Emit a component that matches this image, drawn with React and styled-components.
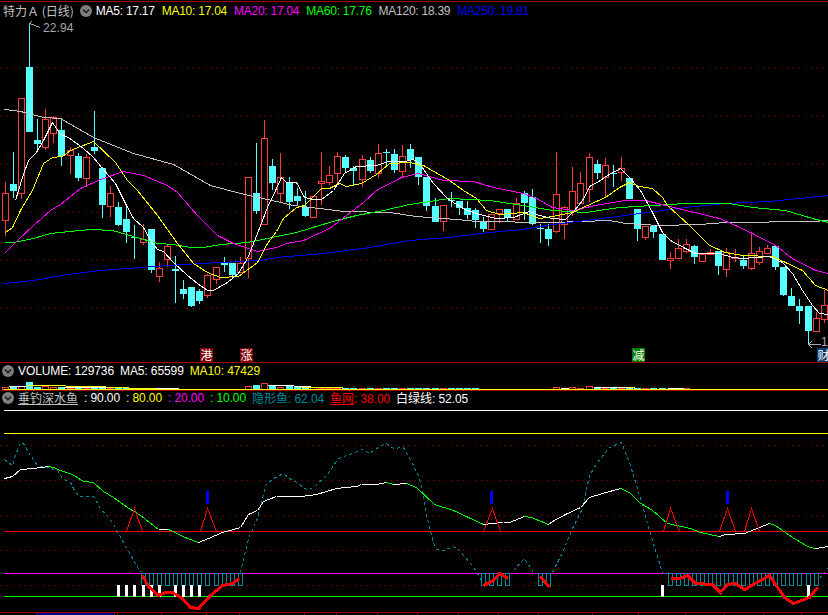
import React from 'react';
import styled, { createGlobalStyle } from 'styled-components';

const GlobalStyle = createGlobalStyle`
  html, body { margin: 0; padding: 0; background: #000; }
`;

const CX = (i) => Math.round(4.67 + 8.11 * i);

/* type, high, body top, body bottom, low — 1 = red hollow, 0 = cyan filled */
const CANDLES = [
  [1,182,193,220,236],[0,152,184,191,198],[1,98,98,193,199],[0,23,67,132,132],[0,119,140,144,150],
  [1,109,119,147,150],[1,116,117,133,143],[0,120,130,156,166],[1,147,150,155,174],[0,153,156,178,181],
  [1,154,157,178,187],[0,111,147,151,154],[0,167,168,205,218],[1,186,193,206,217],[0,202,207,225,226],
  [0,204,219,232,243],[0,225,237,238,259],[1,224,239,242,245],[0,229,229,270,273],[1,262,268,276,282],
  [1,245,246,259,267],[0,256,269,271,303],[0,280,289,294,299],[0,287,287,306,307],[0,289,291,301,304],
  [1,274,275,295,298],[1,267,267,279,284],[0,257,263,265,272],[0,263,263,275,278],[1,257,263,272,273],
  [1,177,177,258,278],[0,143,193,211,214],[1,120,138,224,224],[0,159,166,183,190],[1,153,177,193,202],
  [0,177,183,202,209],[0,188,196,201,205],[0,191,207,216,217],[1,196,196,217,217],[1,152,181,183,205],
  [1,166,175,182,185],[1,152,156,173,183],[0,155,157,168,172],[0,166,168,171,185],[1,155,159,179,187],
  [0,157,160,171,173],[1,144,153,173,178],[0,149,152,153,165],[0,149,154,170,173],[1,145,156,171,177],
  [0,144,149,160,168],[0,157,157,177,185],[0,177,177,206,211],[0,198,206,222,222],[1,205,205,221,231],
  [0,192,200,201,207],[0,201,201,208,215],[0,201,208,215,219],[0,208,210,220,228],[0,217,222,229,232],
  [1,214,214,229,229],[1,209,209,213,223],[0,209,209,218,222],[1,198,203,219,219],[0,191,193,203,220],
  [0,189,197,224,225],[0,224,228,229,243],[0,224,229,239,246],[1,152,194,231,233],[1,206,207,224,239],
  [1,167,191,210,216],[1,172,183,203,203],[1,153,157,189,202],[0,160,164,173,179],[1,158,165,177,197],
  [0,165,173,174,187],[1,157,168,172,181],[0,178,178,199,199],[0,209,209,229,241],[1,226,226,237,240],
  [0,226,226,232,238],[0,234,234,260,260],[1,252,258,260,269],[1,239,248,258,258],[1,239,244,251,253],
  [0,245,246,257,264],[1,254,254,261,261],[1,249,252,254,254],[0,251,251,266,275],[1,248,252,269,277],
  [1,249,257,258,262],[0,255,260,266,269],[1,232,253,268,270],[1,247,251,262,265],[1,245,248,253,253],
  [0,246,246,267,270],[0,267,267,295,296],[0,288,296,306,306],[0,299,306,311,324],[0,306,306,331,345],
  [1,312,318,331,332],[1,290,305,319,323],
];

const MA = {
  gray: '4,109 20,111 43,117 60,118 93,137 133,153 173,164 210,185 240,193 276,201 293,205 319,208 343,211 389,212 416,216 456,219 476,221 552,222 609,220 625,223 659,225 699,224 725,222 812,221 828,220',
  blue: '4,283 33,280 67,274 100,270 140,267 183,264 220,262 260,260 276,257 323,253 369,247 409,240 449,237 489,232 523,229 552,224 602,218 639,213 685,207 725,203 769,201 828,195',
  green: '4,242 13,242 33,238 50,233 90,229 112,230 133,236 157,243 173,244 190,247 203,247 220,244 247,242 267,238 276,236 296,232 319,225 336,220 356,215 383,210 409,204 449,198 489,200 516,204 552,210 585,212 619,207 685,203 729,203 752,207 785,210 812,218 828,222',
  magenta: '4,253 17,240 33,225 50,210 60,204 80,188 100,179 123,171 143,175 167,185 177,192 197,215 217,235 233,243 257,251 276,247 286,243 303,240 329,228 346,215 363,202 376,190 401,177 418,173 443,180 473,181 493,187 523,193 536,198 552,207 572,210 595,205 625,200 645,200 665,205 719,218 735,225 752,233 775,245 792,258 815,270 828,273',
  yellow: '5,232 12,227 20,210 32,190 43,163 52,157 62,156 70,150 93,141 115,162 127,180 137,190 157,215 177,243 193,263 207,272 220,277 238,276 257,262 267,243 276,231 283,218 296,207 304,205 321,188 329,188 339,183 346,186 361,183 376,174 389,163 409,162 423,165 449,180 463,190 476,198 486,210 499,214 523,212 539,218 552,216 572,212 587,205 605,197 619,187 629,182 639,186 652,188 662,197 667,205 689,225 709,245 725,252 742,255 772,256 785,262 802,270 815,285 828,290',
  white: '15,200 22,177 28,160 36,152 43,140 52,122 60,134 68,137 83,148 93,157 102,168 115,183 126,205 133,218 143,227 150,240 157,249 163,251 173,262 187,275 197,283 207,290 213,290 227,282 238,273 247,258 257,233 267,207 276,188 281,177 286,182 296,182 304,197 313,199 321,199 333,190 344,173 356,166 376,165 388,161 404,161 413,159 419,163 433,183 446,197 453,202 466,210 483,215 496,218 513,217 529,211 539,215 552,218 565,219 574,210 582,200 590,185 597,182 607,175 620,168 629,177 640,190 652,212 662,232 670,240 685,248 695,253 719,253 732,257 742,258 769,256 782,262 792,273 802,290 812,305 819,313 828,314',
};

const GRID_MAIN = [67, 116, 164, 212, 260, 308];
const GRID_SUB = [445, 480, 515, 550, 585];

const VOL_TOPS = [387,386,386,382,387,386,387,387,388,388,388,387,388,388,388,388,388,388,388,388,388,388,
  389,389,389,389,389,389,389,389,
  386,385,383,385,387,386,387,388,387,388,388,388,388,388,388,388,388,388,388,388,388,388,388,388,388,388,388,388,388,
  389,389,389,389,389,389,389,389,389,
  387,388,387,388,386,388,388,388,388,388,388,388,388,388,388,388,388,
  389,389,389,389,389,389,389,389,389,389,389,389,389,389,389,389,389];

const LADDER = '4,478 12,476 20,469 33,468 48,466 53,467 60,470 72,474 83,481 93,482 103,491 113,497 127,507 140,515 158,529 168,529 187,538 198,542 208,538 222,532 233,529 240,527 248,514 257,510 263,501 276,496 301,496 316,494 336,488 356,486 361,484 376,484 386,482 393,484 406,483 416,487 434,504 453,510 483,524 503,522 509,522 524,516 531,517 548,524 552,521 565,514 580,507 589,497 602,493 620,488 629,492 639,502 652,510 667,523 690,528 700,532 719,536 725,534 744,533 769,523 775,525 792,537 809,547 815,548 828,546'
  .split(' ').map((p) => p.split(',').map(Number));

const FISH = [
  '4,459 12,465 15,455 20,442 23,443 30,455 37,465 47,467 57,470 62,478 70,482 75,492 80,496 93,496 100,508 112,522 123,542 140,572',
  '240,572 248,538 257,518 265,485 273,478 283,473 289,478 296,482 306,489 313,487 326,475 338,458 349,454 362,449 369,453 379,446 386,443 393,448 403,447 413,465 419,478 423,495 426,515 433,542 436,549 443,550 453,546 459,550 474,568 481,580',
  '513,570 524,558 533,572',
  '552,572 562,552 572,528 582,508 589,475 597,462 609,447 621,442 630,465 639,495 649,530 655,550 662,572 667,575',
  '819,578 828,567',
];

const NET = [
  '142,575 148,586 158,595 165,592 172,592 182,598 190,607 198,608 210,595 222,585 232,583 239,578',
  '483,585 493,580 499,573 508,578',
  '540,576 549,587',
  '670,578 679,578 687,575 695,583 712,584 720,592 727,584 735,583 744,589 769,575 784,597 793,603 809,597 817,587',
];

const PEAKS = [[126,134,142],[200,207,216],[483,492,500],[663,670,679],[719,727,735],[744,751,759]];
const FLAGS = [206, 490, 726];
const HOLLOW = [
  ...Array.from({ length: 13 }, (_, k) => 17 + k),
  59, 60, 61, 62, 66, 67,
  ...Array.from({ length: 19 }, (_, k) => 82 + k),
];
const MARKS = [14, 15, 16, 17, 18, 19, 21, 22, 23, 24, 81, 99];
const TICKS = [36, 114, 117, 161, 206, 239, 304, 336, 377, 417, 458, 498, 538, 592, 638, 685, 724, 763, 801];
const DOT_XS = Array.from({ length: 138 }, (_, k) => 1 + k * 6);

const Page = styled.div`
  width: 828px;
  height: 615px;
  padding-top: 1px;
  box-sizing: border-box;
  background: #000;
  overflow: hidden;
  display: flex;
  flex-direction: column;
  font-family: "Liberation Sans", "Noto Sans CJK SC", sans-serif;
  font-size: 12px;
`;

const Panel = styled.section`
  position: relative;
  height: ${(p) => p.$height}px;
  border-top: ${(p) => (p.$top ? '1px solid #9c0000' : '0')};
  border-bottom: 1px solid #9c0000;
  flex: none;
`;

const Chart = styled.svg`
  display: block;
  width: 828px;
  height: 100%;
`;

const Legend = styled.div`
  position: absolute;
  left: ${(p) => p.$left}px;
  top: ${(p) => p.$top}px;
  display: flex;
  align-items: center;
  gap: ${(p) => p.$gap}px;
  height: 14px;
  white-space: nowrap;
`;

const Quotes = styled.div`
  display: flex;
  gap: 7px;
`;

const Item = styled.span`
  color: ${(p) => p.$color};
  line-height: 14px;
  letter-spacing: -0.1px;
`;

const Quote = styled(Item)`
  letter-spacing: -0.25px;
`;

const Named = styled(Item)`
  font-family: "Noto Sans CJK SC", "Liberation Sans", sans-serif;
  letter-spacing: 0;
  text-decoration: ${(p) => (p.$under ? 'underline' : 'none')};
  text-underline-offset: 1px;
`;

const Title = styled.span`
  color: #c0c0c0;
  font-family: "Noto Sans CJK SC", sans-serif;
  line-height: 14px;
  margin-right: 6px;
`;

const Toggle = styled.svg`
  width: 12px;
  height: 12px;
  flex: none;
  margin-right: ${(p) => p.$gap}px;
`;

const Tag = styled.span`
  position: absolute;
  left: ${(p) => p.$x}px;
  bottom: 0;
  width: 13px;
  height: 14px;
  background: ${(p) => p.$bg};
  color: #fff;
  font-family: "Noto Sans CJK SC", sans-serif;
  font-size: 12px;
  line-height: 14px;
  text-align: center;
`;

const PriceNote = styled.span`
  position: absolute;
  left: ${(p) => p.$x}px;
  top: ${(p) => p.$y}px;
  color: #a8a8a8;
  line-height: 9px;
  letter-spacing: 0.1px;
`;

const Axis = styled.svg`
  display: block;
  width: 828px;
  height: 3px;
  flex: none;
`;

const ToggleIcon = ({ gap }) => (
  <Toggle viewBox="0 0 12 12" $gap={gap}>
    <circle cx="6" cy="6" r="6" fill="#7e7e7e" />
    <path d="M3 4.6 L6 7.6 L9 4.6" fill="none" stroke="#222" strokeWidth="1.5" />
  </Toggle>
);

const Candle = ({ i, data }) => {
  const [up, high, top, bottom, low] = data;
  const x = CX(i);
  const color = up ? '#ff3c3c' : '#55ffff';
  return (
    <g>
      {high < top && <line x1={x + 0.5} x2={x + 0.5} y1={high} y2={top} stroke={color} />}
      {low > bottom && <line x1={x + 0.5} x2={x + 0.5} y1={bottom} y2={low} stroke={color} />}
      {up ? (
        <rect x={x - 2.5} y={top + 0.5} width={6} height={bottom - top} fill="#000" stroke={color} />
      ) : (
        <rect x={x - 3} y={top} width={7} height={Math.max(bottom - top, 1)} fill={color} />
      )}
    </g>
  );
};

const Dotted = ({ y }) => (
  <path fill="#900000" d={DOT_XS.map((x) => `M${x} ${y}h1v1h-1z`).join('')} />
);

const Level = ({ y, color }) => <line x1="4" x2="828" y1={y + 0.5} y2={y + 0.5} stroke={color} />;

const Trend = ({ points, color, width = 1, dash }) => (
  <polyline
    points={points}
    fill="none"
    stroke={color}
    strokeWidth={width}
    strokeDasharray={dash}
    transform="translate(0.5 0.5)"
  />
);

const MainChart = () => (
  <Chart viewBox="0 2 828 360" shapeRendering="crispEdges">
    {GRID_MAIN.map((y) => <Dotted key={y} y={y} />)}
    {CANDLES.map((c, i) => <Candle key={i} i={i} data={c} />)}
    <Trend points={MA.gray} color="#c4c4c4" />
    <Trend points={MA.blue} color="#0000ff" />
    <Trend points={MA.green} color="#00ff00" />
    <Trend points={MA.magenta} color="#ff00ff" />
    <Trend points={MA.yellow} color="#ffff00" />
    <Trend points={MA.white} color="#ffffff" />
    <Trend points="31,21 29,23 40,27" color="#a8a8a8" />
    <Trend points="811,341 808,344 811,347 808,344 820,344" color="#a8a8a8" />
  </Chart>
);

const VolumeChart = () => (
  <Chart viewBox="0 363 828 27" shapeRendering="crispEdges">
    {VOL_TOPS.map((top, i) => {
      const up = CANDLES[i][0];
      const x = CX(i);
      return up ? (
        <rect key={i} x={x - 2.5} y={top + 0.5} width={6} height={389 - top} fill="#000" stroke="#ff3c3c" />
      ) : (
        <rect key={i} x={x - 3} y={top} width={7} height={389 - top} fill="#55ffff" />
      );
    })}
    <Trend points="8,386 25,386" color="#ffffff" />
    <Trend points="63,387 106,387" color="#ffffff" />
    <Trend points="155,388 178,388" color="#ffffff" />
    <Trend points="267,385 293,385" color="#ffffff" />
    <Trend points="293,386 310,386" color="#ffffff" />
    <Trend points="560,388 568,388" color="#ffffff" />
    <Trend points="593,387 634,387" color="#ffffff" />
    <Trend points="667,388 683,388" color="#ffffff" />
    <Trend points="27,385 65,385" color="#ffff00" />
    <Trend points="65,386 105,386" color="#ffff00" />
    <Trend points="105,387 128,387" color="#ffff00" />
    <Trend points="128,388 155,388" color="#ffff00" />
    <Trend points="300,387 342,387" color="#ffff00" />
    <Trend points="627,387 633,387" color="#ffff00" />
    <Level y={389} color="#ffff00" />
  </Chart>
);

const IndicatorChart = () => (
  <Chart viewBox="0 391 828 221" shapeRendering="crispEdges">
    {GRID_SUB.map((y) => <Dotted key={y} y={y} />)}
    <Level y={410} color="#ffffff" />
    <Level y={433} color="#ffff00" />
    <Level y={531} color="#ff0000" />
    <Level y={573} color="#ff00ff" />
    <Level y={596} color="#00ff00" />
    {FISH.map((pts) => (
      <Trend key={pts} points={pts} color="#00899a" dash="3 3" />
    ))}
    {HOLLOW.map((i) => (
      <rect key={i} x={CX(i) - 1.5} y={573.5} width={4} height={12} fill="none" stroke="#008a9a" />
    ))}
    {MARKS.map((i) => <rect key={i} x={CX(i) - 1} y={585} width={3} height={12} fill="#fff" />)}
    {LADDER.slice(1).map(([x, y], k) => {
      const [px, py] = LADDER[k];
      return (
        <Trend key={x} points={`${px},${py} ${x},${y}`} color={y > py ? '#00ff00' : '#ffffff'} />
      );
    })}
    {PEAKS.map(([a, b, c]) => (
      <Trend key={b} points={`${a},531 ${b},508 ${c},531`} color="#ff0000" />
    ))}
    {FLAGS.map((x) => <rect key={x} x={x} y={491} width={3} height={13} fill="#0000ff" />)}
    {NET.map((pts) => <Trend key={pts} points={pts} color="#ff0000" width={3} />)}
  </Chart>
);

const quotes = [
  ['MA5: 17.17', '#ffffff'],
  ['MA10: 17.04', '#ffff00'],
  ['MA20: 17.04', '#ff00ff'],
  ['MA60: 17.76', '#00ff00'],
  ['MA120: 18.39', '#c0c0c0'],
  ['MA250: 19.81', '#0000ff'],
];

export default function App() {
  return (
    <Page>
      <GlobalStyle />
      <Panel $height={360} $top>
        <MainChart />
        <Legend $left={3} $top={2} $gap={0}>
          <Title>特力Ａ (日线)</Title>
          <ToggleIcon gap={4} />
          <Quotes>
            {quotes.map(([text, color]) => <Quote key={text} $color={color}>{text}</Quote>)}
          </Quotes>
        </Legend>
        <PriceNote $x={43} $y={22}>22.94</PriceNote>
        <PriceNote $x={821} $y={336}>1</PriceNote>
        <Tag $x={200} $bg="#800000">港</Tag>
        <Tag $x={240} $bg="#800000">涨</Tag>
        <Tag $x={632} $bg="#007d00">减</Tag>
        <Tag $x={817} $bg="#0b3c6b">财</Tag>
      </Panel>
      <Panel $height={27}>
        <VolumeChart />
        <Legend $left={2} $top={1} $gap={6}>
          <ToggleIcon gap={-2} />
          <Item $color="#ffffff">VOLUME: 129736</Item>
          <Item $color="#ffffff">MA5: 65599</Item>
          <Item $color="#ffff00">MA10: 47429</Item>
        </Legend>
      </Panel>
      <Panel $height={221}>
        <IndicatorChart />
        <Legend $left={2} $top={0} $gap={6}>
          <ToggleIcon gap={-2} />
          <Named $color="#c0c0c0" $under>垂钓深水鱼</Named>
          <Item $color="#ffffff">: 90.00</Item>
          <Item $color="#ffff00">: 80.00</Item>
          <Item $color="#ff00ff">: 20.00</Item>
          <Item $color="#00ff00">: 10.00</Item>
          <Item $color="#00899a"><Named $color="#00899a">隐形鱼</Named>: 62.04</Item>
          <Item $color="#ff0000"><Named $color="#ff0000" $under>鱼网</Named>: 38.00</Item>
          <Item $color="#ffffff"><Named $color="#ffffff">白绿线</Named>: 52.05</Item>
        </Legend>
      </Panel>
      <Axis viewBox="0 613 828 3" shapeRendering="crispEdges">
        <rect x="37" y="613" width="77" height="3" fill="#000080" />
        {TICKS.map((x) => <rect key={x} x={x} y="613" width="1" height="3" fill="#9c0000" />)}
      </Axis>
    </Page>
  );
}
